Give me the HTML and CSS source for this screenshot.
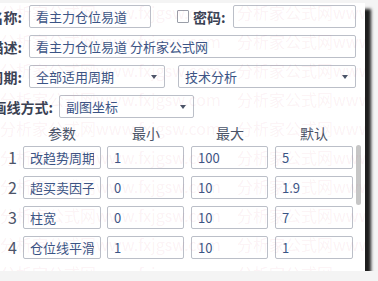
FILE: index.html
```html
<!DOCTYPE html>
<html lang="zh">
<head>
    <meta charset="UTF-8">
    <title>公式属性</title>
    <link rel="stylesheet" href="styles.css">
</head>
<body>
    <div class="dialog">
        <div class="row">
            <label class="label">名称:</label>
            <input class="field name" type="text" value="看主力仓位易道">
            <span class="check"></span>
            <label class="pwd-label">密码:</label>
            <input class="field pwd" type="text" value="">
        </div>
        <div class="row">
            <label class="label">描述:</label>
            <input class="field desc" type="text" value="看主力仓位易道 分析家公式网">
        </div>
        <div class="row">
            <label class="label">周期:</label>
            <div class="select period">全部适用周期</div>
            <div class="select kind">技术分析</div>
        </div>
        <div class="row">
            <label class="label wide">画线方式:</label>
            <div class="select draw">副图坐标</div>
        </div>

        <div class="params">
            <div class="prow head">
                <span></span>
                <span>参数</span>
                <span>最小</span>
                <span>最大</span>
                <span>默认</span>
            </div>
            <div class="prow">
                <span class="num">1</span>
                <input class="field pname" type="text" value="改趋势周期">
                <input class="field pval" type="text" value="1">
                <input class="field pval" type="text" value="100">
                <input class="field pdef" type="text" value="5">
            </div>
            <div class="prow">
                <span class="num">2</span>
                <input class="field pname" type="text" value="超买卖因子">
                <input class="field pval" type="text" value="0">
                <input class="field pval" type="text" value="10">
                <input class="field pdef" type="text" value="1.9">
            </div>
            <div class="prow">
                <span class="num">3</span>
                <input class="field pname" type="text" value="柱宽">
                <input class="field pval" type="text" value="0">
                <input class="field pval" type="text" value="10">
                <input class="field pdef" type="text" value="7">
            </div>
            <div class="prow">
                <span class="num">4</span>
                <input class="field pname" type="text" value="仓位线平滑周期">
                <input class="field pval" type="text" value="1">
                <input class="field pval" type="text" value="10">
                <input class="field pdef" type="text" value="1">
            </div>
        </div>

        <div class="thumb"></div>

        <!-- Wasserzeichen des Screenshots -->
        <div class="watermark">
            <div><span>分析家公式网www.fxjgsw.com</span><span>分析家公式网www.fxjgsw.com</span></div>
            <div><span>分析家公式网www.fxjgsw.com</span><span>分析家公式网www.fxjgsw.com</span></div>
            <div><span>分析家公式网www.fxjgsw.com</span><span>分析家公式网www.fxjgsw.com</span></div>
            <div><span>分析家公式网www.fxjgsw.com</span><span>分析家公式网www.fxjgsw.com</span></div>
            <div><span>分析家公式网www.fxjgsw.com</span><span>分析家公式网www.fxjgsw.com</span></div>
            <div><span>分析家公式网www.fxjgsw.com</span><span>分析家公式网www.fxjgsw.com</span></div>
            <div><span>分析家公式网www.fxjgsw.com</span><span>分析家公式网www.fxjgsw.com</span></div>
            <div><span>分析家公式网www.fxjgsw.com</span><span>分析家公式网www.fxjgsw.com</span></div>
            <div><span>分析家公式网www.fxjgsw.com</span><span>分析家公式网www.fxjgsw.com</span></div>
            <div><span>分析家公式网www.fxjgsw.com</span><span>分析家公式网www.fxjgsw.com</span></div>
        </div>
    </div>
</body>
</html>
```

FILE: styles.css
```css
body {
    margin: 0;
    background: #f4f4f4;
    font-family: "Noto Sans CJK SC", "Liberation Sans", sans-serif;
    color: #3a4254;
    overflow: hidden;
}
.dialog {
    position: relative;
    box-sizing: border-box;
    width: 405px;
    height: 268px;
    margin: 3px 0 0 -40px;
    padding-top: 2px;
    background: #fff;
    box-shadow: 6px 6px 3px rgba(0, 0, 0, 0.88);
    overflow: hidden;
}
.row {
    display: flex;
    align-items: center;
    height: 23px;
    margin-bottom: 7px;
}
.label {
    width: 62px;
    margin-right: 7px;
    text-align: right;
    font-weight: bold;
    font-size: 14px;
}
.label.wide {
    width: 93px;
    margin-right: 6px;
}
.field {
    box-sizing: border-box;
    height: 23px;
    padding: 0 6px;
    border: 1px solid #bbbfc8;
    border-radius: 2px;
    font-family: "Noto Sans CJK SC", "Liberation Sans", sans-serif;
    font-size: 13px;
    color: #3a5485;
    background: transparent;
    outline: none;
}
.name { width: 122px; }
.check {
    box-sizing: border-box;
    width: 12px;
    height: 13px;
    margin-left: 26px;
    border: 1px solid #9a9ea8;
    border-radius: 1px;
}
.pwd-label {
    width: 39px;
    margin-left: 4px;
    font-weight: bold;
    font-size: 14px;
}
.pwd {
    width: 123px;
    margin-left: 1px;
}
.desc { width: 327px; }
.select {
    position: relative;
    box-sizing: border-box;
    height: 23px;
    line-height: 21px;
    padding: 0 6px;
    border: 1px solid #bbbfc8;
    border-radius: 2px;
    font-size: 13px;
    color: #3a5485;
}
.select::after {
    content: "";
    position: absolute;
    right: 7px;
    top: 9px;
    border-left: 3.5px solid transparent;
    border-right: 3.5px solid transparent;
    border-top: 4px solid #4a5468;
}
.period { width: 136px; }
.kind {
    width: 178px;
    margin-left: 13px;
}
.draw { width: 135px; }

.params {
    margin-left: 40px;
}
.prow {
    display: grid;
    grid-template-columns: 23px 84px 84px 84px 78px;
    align-items: center;
    height: 23px;
    margin-bottom: 7px;
}
.prow.head {
    height: 16px;
    margin-top: 2px;
    margin-bottom: 4px;
    font-size: 14px;
    color: #4a5468;
}
.prow.head span {
    width: 78px;
    text-align: center;
    line-height: 16px;
}
.num {
    padding-left: 2px;
    text-align: center;
    font-size: 16px;
    color: #4a5468;
}
.pname { width: 78px; }
.pval { width: 77px; }
.pdef { width: 78px; }

.thumb {
    position: absolute;
    left: 396px;
    top: 142px;
    width: 5px;
    height: 60px;
    border-radius: 3px;
    background: #c6c6c6;
}
.watermark {
    position: absolute;
    left: 40px;
    top: -5px;
    font-size: 16px;
    line-height: 29px;
    white-space: nowrap;
    color: rgba(210, 90, 120, 0.08);
    pointer-events: none;
}
.watermark span {
    display: inline-block;
    width: 237px;
}
```
